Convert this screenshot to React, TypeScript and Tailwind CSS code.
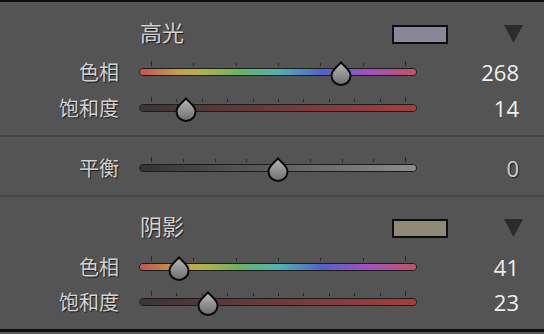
import React from "react";

type Slider = {
  label: string;
  value: number;
  pos: number; // thumb center, px from track start
  track: string;
  ticks: number;
  valueClass?: string;
};

const HUE =
  "bg-[linear-gradient(to_right,#c25454,#c0a04c_14%,#b4b24a_22%,#6cb264_36%,#52b2b4_50%,#5262c8_66%,#9e52c2_82%,#c2506a)]";
const SAT = "bg-[linear-gradient(to_right,#3a3636,#a63e3e)]";
const BAL = "bg-[linear-gradient(to_right,#333333,#8c8c8c)]";

const labelCls =
  "text-[#d2d2d2] [text-shadow:1px_1px_1px_rgba(0,0,0,0.7)] [font-family:'Noto_Sans_CJK_SC',sans-serif]";

function Thumb({ left }: { left: number }) {
  return (
    <svg
      width="24"
      height="25"
      viewBox="0 0 24 25"
      className="absolute top-1/2 -mt-[11.5px]"
      style={{ left: left - 12 }}
    >
      <defs>
        <linearGradient id="tg" x1="0" y1="0" x2="0" y2="1">
          <stop offset="0" stopColor="#bababa" />
          <stop offset="1" stopColor="#6c6c6c" />
        </linearGradient>
      </defs>
      <path
        d="M12 1.2 C14.5 5 21.5 8.5 21.5 14.5 A9.5 9.5 0 0 1 2.5 14.5 C2.5 8.5 9.5 5 12 1.2 Z"
        fill="url(#tg)"
        stroke="#0a0a0a"
        strokeWidth="2"
        strokeLinejoin="round"
      />
    </svg>
  );
}

function SliderRow({ s, h }: { s: Slider; h: string }) {
  const ticks = Array.from({ length: s.ticks }, (_, i) => 12 + (254 / (s.ticks - 1)) * i);
  return (
    <div className={`flex items-center ${h}`}>
      <div className={`w-[119px] text-right text-[20px] leading-none ${labelCls}`}>{s.label}</div>
      <div className="relative ml-[20px] flex h-full w-[278px] items-center">
        {ticks.map((x, i) => (
          <div
            key={i}
            className={`absolute top-1/2 w-px bg-[#2a2a2a] ${
              i === 0 || i === s.ticks - 1 ? "-mt-[11px] h-[5px]" : "-mt-[9px] h-[3px]"
            }`}
            style={{ left: x }}
          />
        ))}
        <div className="h-[8px] w-full rounded-full border-[1.5px] border-[#1c1c1c]">
          <div className={`h-full w-full rounded-full ${s.track}`} />
        </div>
        <Thumb left={s.pos} />
      </div>
      <div
        className={`w-[102px] text-right text-[22px] leading-none [font-family:'Open_Sans',sans-serif] ${
          s.valueClass ?? "text-[#efefef]"
        }`}
      >
        {s.value}
      </div>
    </div>
  );
}

function Header({ title, swatch }: { title: string; swatch: string }) {
  return (
    <div className="flex h-[36px] items-center">
      <div className={`w-[392px] pl-[140px] pb-[7px] text-[22px] leading-none ${labelCls}`}>{title}</div>
      <div className={`h-[19px] w-[56px] border-2 border-[#0c0c0c] ${swatch}`} />
      <svg width="19" height="18" viewBox="0 0 19 18" className="ml-[56px]">
        <path d="M0 0 H19 L9.5 18 Z" fill="#2b2b2b" />
      </svg>
    </div>
  );
}

export default function App() {
  return (
    <div className="h-[334px] w-[544px] overflow-hidden bg-[#545454]">
      <div className="h-[2px] bg-[#0e0e0e]" />
      <div className="flex flex-col pt-[14px] pb-[9px]">
        <Header title="高光" swatch="bg-[#8a8598]" />
        <div className="h-[2px]" />
        <SliderRow h="h-[36px]" s={{ label: "色相", value: 268, pos: 202, track: HUE, ticks: 7 }} />
        <SliderRow h="h-[36px]" s={{ label: "饱和度", value: 14, pos: 47, track: SAT, ticks: 11 }} />
      </div>
      <div className="h-[2px] bg-[#464646]" />
      <div className="pt-[13px] pb-[9px]">
        <SliderRow
          h="h-[36px]"
          s={{
            label: "平衡",
            value: 0,
            pos: 139,
            track: BAL,
            ticks: 9,
            valueClass: "text-[#cfcfcf] [text-shadow:1px_1px_1px_rgba(0,0,0,0.7)]",
          }}
        />
      </div>
      <div className="h-[2px] bg-[#464646]" />
      <div className="flex flex-col pt-[13px] pb-[10px]">
        <Header title="阴影" swatch="bg-[#8f8a78]" />
        <div className="h-[3px]" />
        <SliderRow h="h-[36px]" s={{ label: "色相", value: 41, pos: 40, track: HUE, ticks: 7 }} />
        <SliderRow h="h-[34px]" s={{ label: "饱和度", value: 23, pos: 69, track: SAT, ticks: 11 }} />
      </div>
      <div className="h-[3px] bg-[#0e0e0e]" />
      <div className="h-[2px] bg-[#5a5a5a]" />
    </div>
  );
}
